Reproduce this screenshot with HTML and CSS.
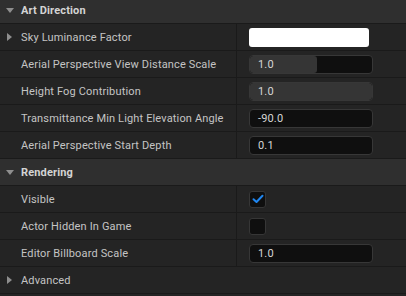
FILE: index.html
```html
<!DOCTYPE html>
<html>
<head>
<meta charset="utf-8">
<link rel="stylesheet" href="styles.css">
</head>
<body>
<div class="panel">
  <div class="cat">
    <span class="arrow down"></span><span class="cat-title">Art Direction</span>
  </div>
  <div class="row">
    <div class="name"><span class="arrow right"></span>Sky Luminance Factor</div>
    <div class="value"><div class="color-box"></div></div>
  </div>
  <div class="row">
    <div class="name">Aerial Perspective View Distance Scale</div>
    <div class="value"><div class="field slider"><div class="fill" style="width:55%"></div><span class="num">1.0</span></div></div>
  </div>
  <div class="row">
    <div class="name">Height Fog Contribution</div>
    <div class="value"><div class="field slider"><div class="fill" style="width:100%"></div><span class="num">1.0</span></div></div>
  </div>
  <div class="row">
    <div class="name">Transmittance Min Light Elevation Angle</div>
    <div class="value"><div class="field"><span class="num">-90.0</span></div></div>
  </div>
  <div class="row">
    <div class="name">Aerial Perspective Start Depth</div>
    <div class="value"><div class="field"><span class="num">0.1</span></div></div>
  </div>
  <div class="cat">
    <span class="arrow down"></span><span class="cat-title">Rendering</span>
  </div>
  <div class="row">
    <div class="name">Visible</div>
    <div class="value"><div class="check"><svg width="12" height="10" viewBox="0 0 12 10"><path d="M1.5 5.2 L4.5 8 L10.5 1.8" fill="none" stroke="#1f86f0" stroke-width="2" stroke-linecap="round" stroke-linejoin="round"/></svg></div></div>
  </div>
  <div class="row">
    <div class="name">Actor Hidden In Game</div>
    <div class="value"><div class="check"></div></div>
  </div>
  <div class="row">
    <div class="name">Editor Billboard Scale</div>
    <div class="value"><div class="field"><span class="num">1.0</span></div></div>
  </div>
  <div class="adv">
    <span class="arrow right"></span>Advanced
  </div>
  <div class="tail"></div>
</div>
</body>
</html>
```
FILE: styles.css
```css
html, body {
  margin: 0;
  padding: 0;
  background: #1a1a1a;
  overflow: hidden;
}
.panel {
  margin-top: -3px;
  width: 406px;
  font-family: Roboto, "Noto Sans", sans-serif;
  font-size: 11px;
  letter-spacing: 0.15px;
  color: #c4c4c4;
  display: flex;
  flex-direction: column;
  gap: 1px;
}
.cat {
  height: 26px;
  background: #2f2f2f;
  display: flex;
  align-items: center;
  position: relative;
  padding-left: 21px;
}
.cat-title {
  font-weight: bold;
  color: #d4d4d4;
}
.arrow {
  position: absolute;
  width: 0;
  height: 0;
}
.arrow.down {
  left: 6px;
  top: 11px;
  border-left: 4px solid transparent;
  border-right: 4px solid transparent;
  border-top: 5px solid #8e8e8e;
}
.arrow.right {
  left: 7px;
  top: 9px;
  border-top: 4px solid transparent;
  border-bottom: 4px solid transparent;
  border-left: 5px solid #8e8e8e;
}
.row {
  height: 26px;
  display: grid;
  grid-template-columns: 236px 1fr;
  gap: 1px;
  background: #1a1a1a;
}
.name {
  background: #242424;
  display: flex;
  align-items: center;
  padding-left: 21px;
  position: relative;
  white-space: nowrap;
  overflow: hidden;
}
.value {
  background: #242424;
  display: flex;
  align-items: center;
  padding-left: 12px;
}
.color-box {
  width: 120px;
  height: 19px;
  background: #ffffff;
  border-radius: 3px;
}
.field {
  width: 124px;
  height: 19px;
  box-sizing: border-box;
  background: #0f0f0f;
  border: 1px solid #373737;
  border-radius: 4px;
  position: relative;
  display: flex;
  align-items: center;
  overflow: hidden;
}
.fill {
  position: absolute;
  left: 0;
  top: 0;
  bottom: 0;
  background: #353535;
  border-radius: 3px;
}
.num {
  position: relative;
  padding-left: 8px;
  color: #d6d6d6;
}
.check {
  width: 17px;
  height: 17px;
  box-sizing: border-box;
  background: #0f0f0f;
  border: 1px solid #363636;
  border-radius: 3px;
  display: flex;
  align-items: center;
  justify-content: center;
}
.adv {
  height: 26px;
  background: #242424;
  display: flex;
  align-items: center;
  padding-left: 21px;
  position: relative;
}
.tail {
  height: 10px;
  background: #242424;
}
```
